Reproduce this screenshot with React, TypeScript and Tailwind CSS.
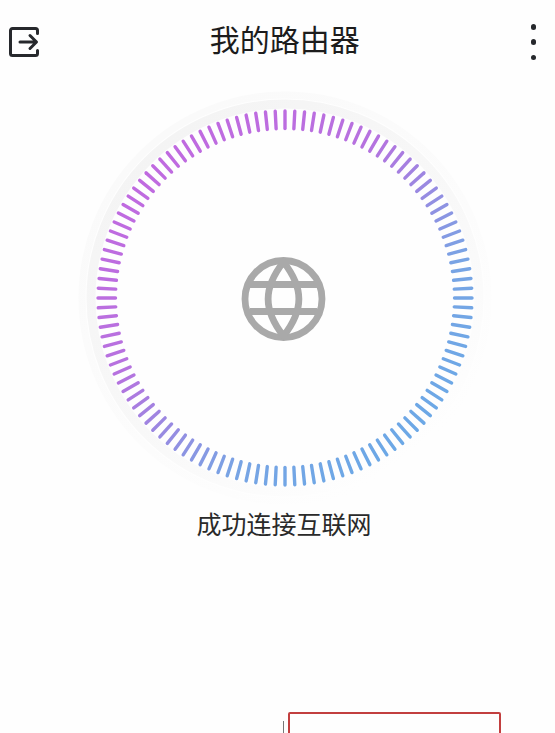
const ticks = Array.from({ length: 120 }, (_, i) => (i * 3 * Math.PI) / 180);

function ExitIcon() {
  return (
    <svg width="30" height="30" viewBox="0 0 30 30" fill="none" stroke="#26282c" strokeWidth="3" strokeLinecap="round" strokeLinejoin="round">
      <path d="M28.5 6.5V3.5a2 2 0 0 0-2-2h-23a2 2 0 0 0-2 2v23a2 2 0 0 0 2 2h23a2 2 0 0 0 2-2v-3" />
      <path d="M11 15h16M21 8.5l6.5 6.5-6.5 6.5" />
    </svg>
  );
}

function Ring() {
  return (
    <svg width="416" height="416" viewBox="-208 -208 416 416" fill="none" className="ml-[77px] shrink-0">
      <defs>
        <linearGradient id="tick" gradientUnits="userSpaceOnUse" x1="-125" y1="-135" x2="125" y2="135">
          <stop offset="0" stopColor="#c06ae0" />
          <stop offset="0.35" stopColor="#b672df" />
          <stop offset="0.75" stopColor="#78a4e4" />
          <stop offset="1" stopColor="#6ca8e6" />
        </linearGradient>
        <linearGradient id="haloInner" gradientUnits="userSpaceOnUse" x1="-120" y1="-160" x2="120" y2="160">
          <stop offset="0" stopColor="#f4f4f4" />
          <stop offset="0.55" stopColor="#f8f8f8" />
          <stop offset="1" stopColor="#fefefe" />
        </linearGradient>
        <linearGradient id="haloOuter" gradientUnits="userSpaceOnUse" x1="-120" y1="-160" x2="120" y2="160">
          <stop offset="0" stopColor="#fafafa" />
          <stop offset="0.6" stopColor="#fcfcfc" />
          <stop offset="1" stopColor="#fefefe" />
        </linearGradient>
      </defs>
      <circle r="203" stroke="url(#haloOuter)" strokeWidth="7" />
      <circle r="194" stroke="url(#haloInner)" strokeWidth="9" />
      {ticks.map((a, i) => (
        <line
          key={i}
          x1={169.5 * Math.cos(a)}
          y1={169.5 * Math.sin(a)}
          x2={187 * Math.cos(a)}
          y2={187 * Math.sin(a)}
          stroke="url(#tick)"
          strokeWidth="3.4"
          strokeLinecap="round"
        />
      ))}
      <g stroke="#a9a9a9" strokeWidth="6.8" strokeLinejoin="round">
        <circle cx="-1.5" cy="1" r="38.5" />
        <path d="M-1.5-36C-22-10-22 12-1.5 38C19 12 19-10-1.5-36Z" />
        <path d="M-35-13.5H32M-35 13.5H32" />
      </g>
    </svg>
  );
}

export default function App() {
  return (
    <div
      className="h-screen overflow-hidden bg-[#fefefe] text-[#1c1c1c]"
      style={{ fontFamily: '"Noto Sans CJK SC", "Noto Sans", sans-serif' }}
    >
      {/* Header */}
      <div className="h-[90px] pl-[9px] pr-[19px] flex justify-between items-start">
        <div className="mt-[27px]">
          <ExitIcon />
        </div>
        <h1 className="mt-[23px] text-[30px] leading-[30px] font-normal">我的路由器</h1>
        <div className="mt-[24px] flex flex-col gap-[9.8px]">
          <div className="w-[5.5px] h-[5.5px] rounded-full bg-[#26282c]" />
          <div className="w-[5.5px] h-[5.5px] rounded-full bg-[#26282c]" />
          <div className="w-[5.5px] h-[5.5px] rounded-full bg-[#26282c]" />
        </div>
      </div>

      <Ring />

      <p className="-mt-[2px] h-[38px] leading-[38px] text-[25px] text-center pl-[13px] text-[#2a2a2a]">成功连接互联网</p>

      {/* Bottom action, cut off by the window */}
      <div className="mt-[170px] pl-[283px] flex items-start">
        <div className="w-px h-[40px] mt-[9px] bg-[#777]" />
        <div className="ml-[4px] w-[213px] h-[60px] border-2 border-[#c23f3f] rounded-[2px]" />
      </div>
    </div>
  );
}
